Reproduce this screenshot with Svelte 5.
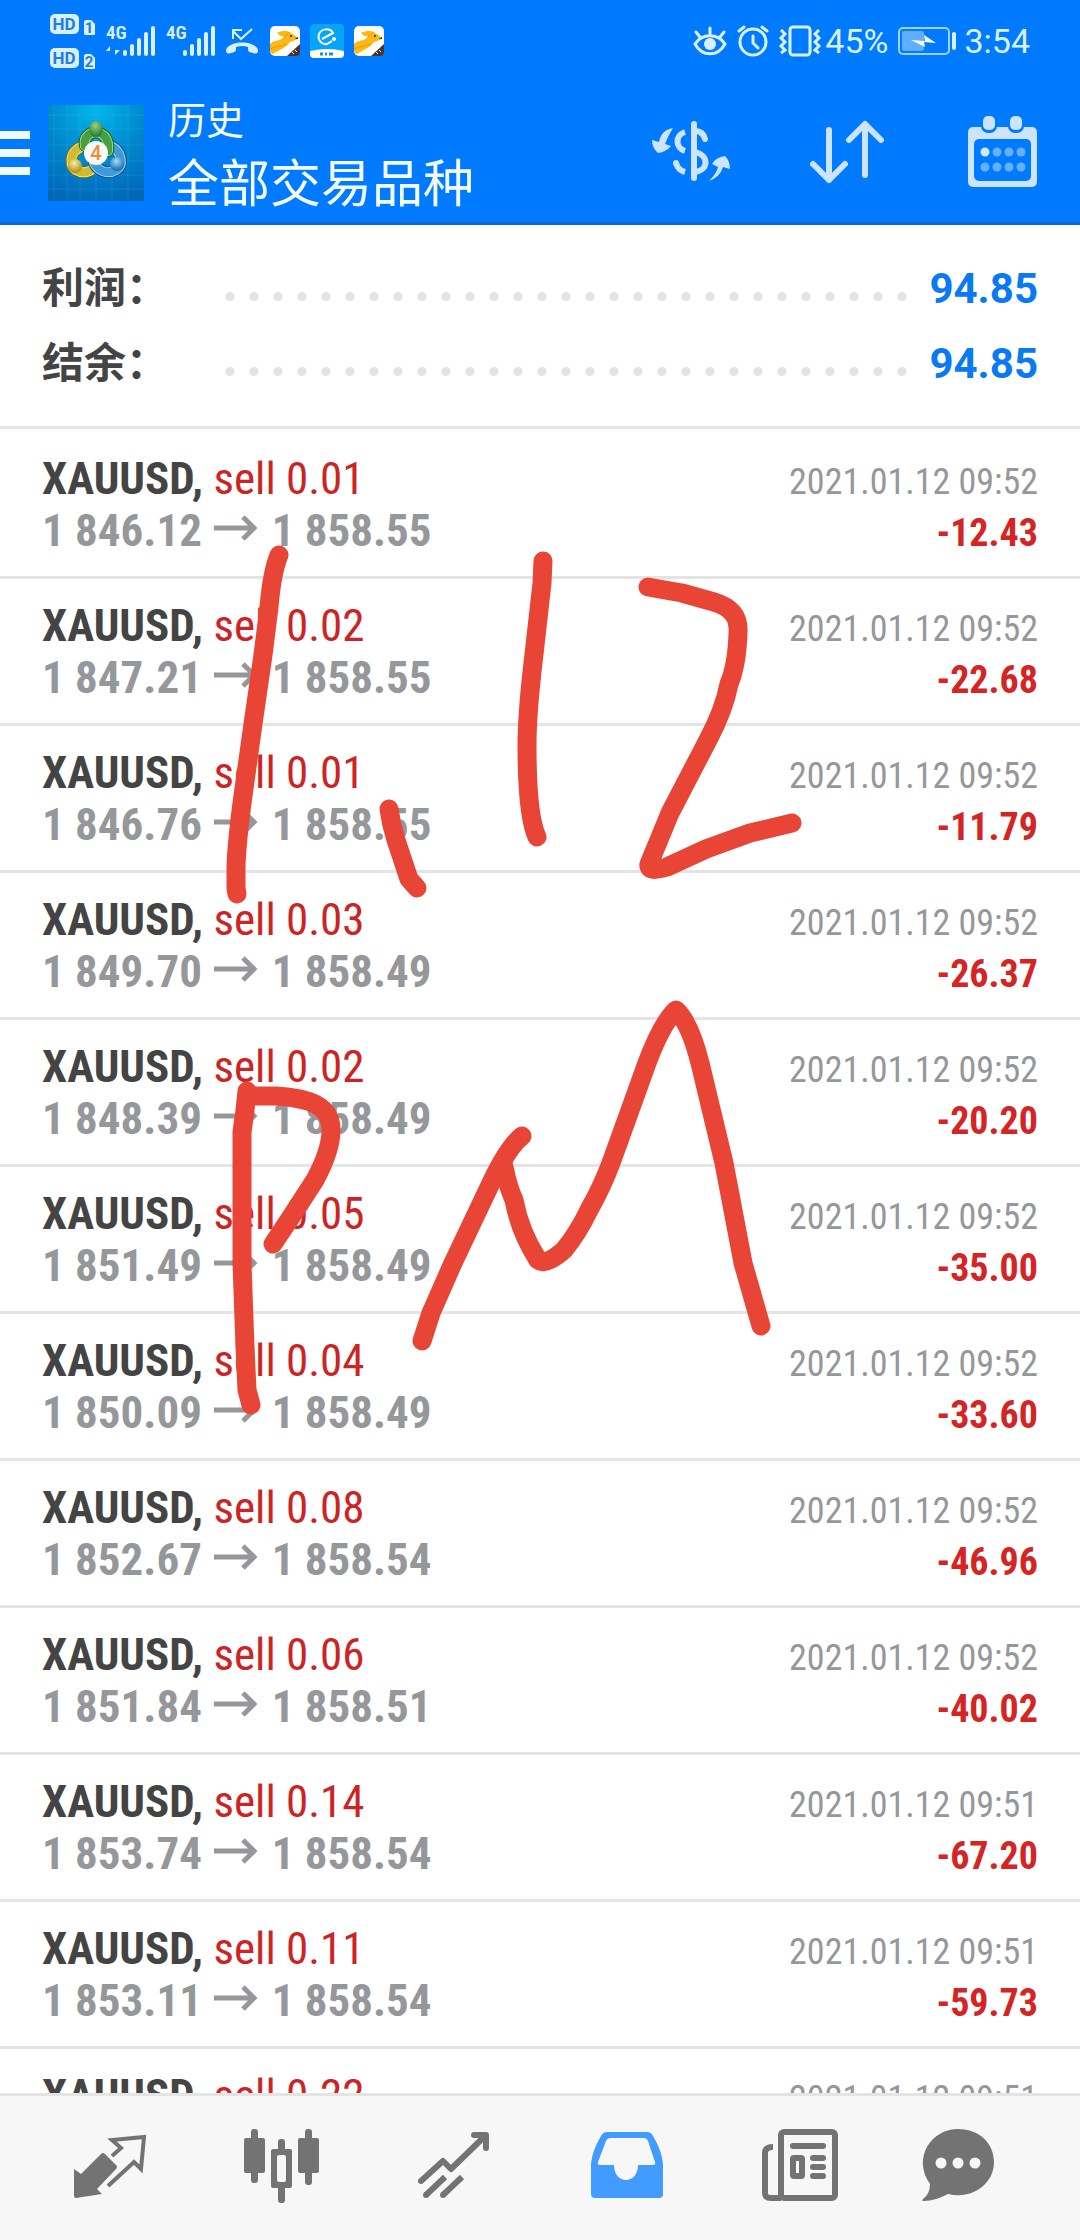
<script lang="ts">
    type Deal = {
        volume: string;
        open: string;
        close: string;
        time: string;
        profit: string;
    };

    const summary = [
        { label: "利润：", value: "94.85" },
        { label: "结余：", value: "94.85" },
    ];

    const deals: Deal[] = [
        { volume: "0.01", open: "1 846.12", close: "1 858.55", time: "09:52", profit: "-12.43" },
        { volume: "0.02", open: "1 847.21", close: "1 858.55", time: "09:52", profit: "-22.68" },
        { volume: "0.01", open: "1 846.76", close: "1 858.55", time: "09:52", profit: "-11.79" },
        { volume: "0.03", open: "1 849.70", close: "1 858.49", time: "09:52", profit: "-26.37" },
        { volume: "0.02", open: "1 848.39", close: "1 858.49", time: "09:52", profit: "-20.20" },
        { volume: "0.05", open: "1 851.49", close: "1 858.49", time: "09:52", profit: "-35.00" },
        { volume: "0.04", open: "1 850.09", close: "1 858.49", time: "09:52", profit: "-33.60" },
        { volume: "0.08", open: "1 852.67", close: "1 858.54", time: "09:52", profit: "-46.96" },
        { volume: "0.06", open: "1 851.84", close: "1 858.51", time: "09:52", profit: "-40.02" },
        { volume: "0.14", open: "1 853.74", close: "1 858.54", time: "09:51", profit: "-67.20" },
        { volume: "0.11", open: "1 853.11", close: "1 858.54", time: "09:51", profit: "-59.73" },
        { volume: "0.22", open: "1 853.20", close: "1 858.54", time: "09:51", profit: "-117.48" },
    ];

    let active = $state("history");
</script>

{#snippet signal(data: boolean)}
    <svg class="signal" width="50" height="32" viewBox="0 0 50 32">
        <text x="0" y="14" font-size="19" font-weight="600">4G</text>
        {#if data}
            <path d="M4 30V21l-4 5h4M9 21v9l5-5H9" />
        {/if}
        <rect x="17" y="25" width="4" height="6" rx="2" />
        <rect x="24" y="19" width="4" height="12" rx="2" />
        <rect x="31" y="13" width="4" height="18" rx="2" />
        <rect x="38" y="7" width="4" height="24" rx="2" />
        <rect x="45" y="1" width="4" height="30" rx="2" />
    </svg>
{/snippet}

{#snippet hd(sim: string)}
    <svg width="46" height="21" viewBox="0 0 46 21">
        <rect width="29" height="20" rx="5" fill="#dbf0ff" />
        <text x="14" y="16" font-size="17" font-weight="700" text-anchor="middle" fill="#1a7fe8">HD</text>
        <path d="M34 8q0-2 2-2h5l4 4v10q0 1-1 1h-9q-1 0-1-1z" fill="#dbf0ff" />
        <text x="39" y="19" font-size="15" font-weight="700" text-anchor="middle" fill="#1a7fe8">{sim}</text>
    </svg>
{/snippet}

{#snippet dogApp()}
    <svg width="30" height="30" viewBox="0 0 30 30">
        <rect width="30" height="30" rx="5" fill="#fff" />
        <path d="M0 18C4 14 9 15 13 12L14 10C11 11 8 9 7 6C10 7 12 4 16 5C20 5 24 9 28 12C26 15 22 15 20 16C17 21 9 24 3 28Q0 27 0 24z" fill="#fdb913" />
        <path d="M0 23C5 20 11 21 17 18M13 12C15 10 18 9 19 6" fill="none" stroke="#f39800" />
        <circle cx="21" cy="10" r="1" fill="#222" />
        <path d="M25 13l3-2v2z" fill="#222" />
        <path d="M30 18v8q0 4-4 4h-9z" fill="#4a3430" />
        <path d="M22 26l2 2M25 24l2 2" stroke="#fff" />
    </svg>
{/snippet}

<div class="app">
    <header>
        <div class="status">
            <div class="hd">
                {@render hd("1")}
                {@render hd("2")}
            </div>
            {@render signal(true)}
            {@render signal(false)}
            <svg class="call" width="32" height="28" viewBox="0 0 32 28">
                <path d="M26 2L15 12L7 4M7 12V3h9" fill="none" stroke="#dbf0ff" stroke-width="2" />
                <path d="M0 23C3 13 29 13 32 23C32 27 30 27 27 26C22 25 22 24 22 20Q16 18 10 20C10 24 10 25 5 26C2 27 0 27 0 23z" fill="#dbf0ff" />
            </svg>
            {@render dogApp()}
            <svg width="34" height="34" viewBox="0 0 34 34">
                <rect width="34" height="34" rx="4" fill="#08a4f5" />
                <path d="M0 27Q17 23 34 27v3q0 4-4 4H4q-4 0-4-4z" fill="#fff" />
                <path d="M12 15L23 9C20 4 12 4 9 10C7 16 12 21 17 20L22 17" fill="none" stroke="#fff" stroke-width="2" />
                <circle cx="24" cy="15" r="2" fill="#fff" />
                <path d="M10 30h3M15 30h2M19 30h4" stroke="#1592e6" stroke-width="3" />
            </svg>
            {@render dogApp()}

            <span class="spacer"></span>

            <svg width="34" height="32" viewBox="0 0 34 32" fill="none" stroke="#d8f1ff" stroke-width="3" stroke-linecap="round">
                <path d="M2 19C9 8 25 8 32 19C25 32 9 32 2 19zM17 9V3M7 12L3 7M27 12l4-5" />
                <circle cx="17" cy="19" r="6" fill="#d8f1ff" stroke="none" />
            </svg>
            <svg width="32" height="32" viewBox="0 0 32 32" fill="none" stroke="#d8f1ff" stroke-width="3" stroke-linecap="round">
                <circle cx="16" cy="17" r="13" />
                <path d="M16 11v7l5 5M2 6l5-4M30 6l-5-4" />
            </svg>
            <svg width="42" height="32" viewBox="0 0 42 32" fill="none" stroke="#d8f1ff" stroke-width="3">
                <rect x="11" y="2" width="20" height="28" rx="3" />
                <path d="M2 5l4 4-4 4 4 4-4 4 4 4-4 3M40 5l-4 4 4 4-4 4 4 4-4 4 4 3" />
            </svg>
            <span class="percent">45%</span>
            <svg width="60" height="28" viewBox="0 0 60 28">
                <rect x="1" y="1" width="50" height="26" rx="4" fill="none" stroke="#9fd2ff" stroke-width="2" />
                <rect x="4" y="4" width="22" height="20" rx="2" fill="#5faeff" />
                <path d="M13 13l14 1-1-6 12 8-12-1 1 5z" fill="#fff" />
                <rect x="54" y="5" width="4" height="18" rx="2" fill="#d8f1ff" />
            </svg>
            <span class="clock">3:54</span>
        </div>

        <div class="toolbar">
            <button class="menu" aria-label="菜单">
                <svg width="30" height="44" viewBox="0 0 30 44" fill="#f0f9ff">
                    <path d="M0 0h30v8H0zM0 18h30v8H0zM0 36h30v8H0z" />
                </svg>
            </button>
            <svg class="logo" width="96" height="96" viewBox="0 0 96 96">
                <defs>
                    <radialGradient id="sky" cx="50%" cy="5%" r="100%">
                        <stop offset="0" stop-color="#00b6ea" />
                        <stop offset="0.5" stop-color="#0088cc" />
                        <stop offset="1" stop-color="#0066b8" />
                    </radialGradient>
                    <radialGradient id="green" cx="45%" cy="30%" r="70%">
                        <stop offset="0" stop-color="#9ad08a" />
                        <stop offset="1" stop-color="#1e7a2c" />
                    </radialGradient>
                    <radialGradient id="gold" cx="45%" cy="30%" r="70%">
                        <stop offset="0" stop-color="#f8f0a0" />
                        <stop offset="1" stop-color="#a98a10" />
                    </radialGradient>
                    <radialGradient id="blue" cx="45%" cy="30%" r="70%">
                        <stop offset="0" stop-color="#a4dcf8" />
                        <stop offset="1" stop-color="#1565a8" />
                    </radialGradient>
                </defs>
                <rect width="96" height="96" fill="url(#sky)" />
                <path d="M6 0v96M19 0v96M32 0v96M48 0v96M64 0v96M80 0v96M0 10h96M0 24h96M0 40h96M0 56h96M0 70h96M0 84h96" stroke="#4cc4ee" stroke-opacity="0.2" />
                <g fill="none" stroke-linecap="round">
                    <path d="M40 41C23 41 19 59 28 65C36 70 44 66 49 60" stroke="#75680f" stroke-width="12" />
                    <path d="M40 41C23 41 19 59 28 65C36 70 44 66 49 60" stroke="#f0e68a" stroke-width="10" />
                    <path d="M40 41C23 41 19 59 28 65C36 70 44 66 49 60" stroke="#cdbb30" stroke-width="8" />
                    <path d="M63 41C74 47 76 60 68 65C60 70 50 66 46 58" stroke="#0e4a8a" stroke-width="12" />
                    <path d="M63 41C74 47 76 60 68 65C60 70 50 66 46 58" stroke="#9bd4f5" stroke-width="10" />
                    <path d="M63 41C74 47 76 60 68 65C60 70 50 66 46 58" stroke="#3f9bd8" stroke-width="8" />
                    <path d="M37 41C33 24 63 20 60 46" stroke="#17622a" stroke-width="12" />
                    <path d="M37 41C33 24 63 20 60 46" stroke="#a5d890" stroke-width="10" />
                    <path d="M37 41C33 24 63 20 60 46" stroke="#46a040" stroke-width="8" />
                </g>
                <ellipse cx="48" cy="24" rx="7" ry="8" fill="url(#green)" />
                <circle cx="27" cy="61" r="7" fill="url(#gold)" />
                <circle cx="69" cy="59" r="7" fill="url(#blue)" />
                <circle cx="48" cy="48" r="12" fill="#f8f8f8" />
                <text x="48" y="55" font-size="20" font-weight="500" text-anchor="middle" fill="#f58a30">4</text>
            </svg>
            <h1>
                <small>历史</small>
                全部交易品种
            </h1>
            <div class="actions">
                <button aria-label="货币">
                    <svg width="96" height="96" viewBox="0 0 96 96" fill="none" stroke="#cce4ff" stroke-width="6">
                        <path d="M51 19v54" stroke-linecap="round" />
                        <path d="M42 27C32 30 32 43 42 46M42 67Q35 65 33 58" />
                        <circle cx="33" cy="58" r="3" fill="#cce4ff" stroke="none" />
                        <path d="M52 26Q60 26 62 34" stroke-linecap="round" />
                        <path d="M52 47C66 50 66 65 52 67" />
                        <path d="M30 23C19 25 17 32 16 37L9 35Q9 43 15 48Q23 47 28 41L22 39Q25 31 30 23zM66 76C73 69 74 65 75 62L69 59Q73 52 82 51Q87 56 87 64L80 62Q77 72 66 76z" fill="#cce4ff" stroke="none" />
                    </svg>
                </button>
                <button aria-label="排序">
                    <svg width="96" height="96" viewBox="0 0 96 96" fill="none" stroke="#cce4ff" stroke-width="6" stroke-linecap="round" stroke-linejoin="round">
                        <path d="M30 25v50M14 59l16 16 16-16M66 70V20M50 35l16-16 16 16" />
                    </svg>
                </button>
                <button aria-label="日期">
                    <svg width="96" height="96" viewBox="0 0 96 96">
                        <rect x="13" y="22" width="69" height="60" rx="5" fill="#cce4ff" />
                        <rect x="19" y="34" width="57" height="42" rx="5" fill="#007aff" />
                        <rect x="26" y="9" width="16" height="19" rx="7" fill="#007aff" />
                        <rect x="53" y="9" width="16" height="19" rx="7" fill="#007aff" />
                        <rect x="28" y="11" width="12" height="14" rx="5" fill="#cce4ff" />
                        <rect x="55" y="11" width="12" height="14" rx="5" fill="#cce4ff" />
                        {#each [47, 62] as cy}
                            {#each [30, 42, 54, 66] as cx}
                                <circle {cx} {cy} r="4.5" fill={cy === 47 && cx === 30 ? "#cfeaff" : "#66afff"} />
                            {/each}
                        {/each}
                    </svg>
                </button>
            </div>
        </div>
    </header>

    <main>
        <dl class="summary">
            {#each summary as item}
                <div>
                    <dt>{item.label}</dt>
                    <dd class="dots"></dd>
                    <dd>{item.value}</dd>
                </div>
            {/each}
        </dl>

        <ul class="deals">
            {#each deals as deal}
                <li>
                    <span class="symbol"><b>XAUUSD,</b> sell {deal.volume}</span>
                    <time>2021.01.12 {deal.time}</time>
                    <span class="prices">
                        {deal.open}
                        <svg width="45" height="30" viewBox="0 0 45 30" fill="none" stroke="#95979a" stroke-width="5" aria-label="→">
                            <path d="M0 12h41M29 1l11 11-11 11" />
                        </svg>
                        {deal.close}
                    </span>
                    <strong>{deal.profit}</strong>
                </li>
            {/each}
        </ul>
    </main>

    <nav>
        <button class:active={active === "quotes"} aria-label="行情" onclick={() => (active = "quotes")}>
            <svg width="96" height="96" viewBox="0 0 96 96" fill="currentColor">
                <path d="M12 49l7 5L39 34q2-2 4 0L54 45q2 2 0 4L35 69l5 5L14 78q-2 0-2-2z" />
                <path d="M50 36l9-8-9-8 32-3-3 32-7-7-26 24" fill="none" stroke="currentColor" stroke-width="4" />
            </svg>
        </button>
        <button class:active={active === "chart"} aria-label="图表" onclick={() => (active = "chart")}>
            <svg width="96" height="96" viewBox="0 0 96 96" fill="currentColor">
                <rect x="10" y="18" width="21" height="35" rx="2" />
                <rect x="17" y="9" width="7" height="54" rx="3" />
                <rect x="64" y="18" width="21" height="35" rx="2" />
                <rect x="71" y="9" width="7" height="56" rx="3" />
                <rect x="37" y="29" width="21" height="39" rx="2" />
                <rect x="44" y="19" width="7" height="64" rx="3" />
                <rect x="43" y="35" width="9" height="27" rx="2" fill="#f7f7f7" />
            </svg>
        </button>
        <button class:active={active === "trade"} aria-label="交易" onclick={() => (active = "trade")}>
            <svg width="96" height="96" viewBox="0 0 96 96" fill="none" stroke="currentColor" stroke-width="6">
                <path d="M15 61l22-20 8 8 34-33M68 15h12v13" stroke-linecap="round" stroke-linejoin="round" />
                <path d="M20 75l19-18M37 75l19-18" />
                <path d="M20 75h0M37 75h0" stroke-linecap="round" />
            </svg>
        </button>
        <button class:active={active === "history"} aria-label="历史" onclick={() => (active = "history")}>
            <svg width="96" height="96" viewBox="0 0 96 96" fill="currentColor" fill-rule="evenodd">
                <path d="M29 12h40q4 0 6 4Q84 31 85 44v30q0 4-4 4H17q-4 0-4-4V44Q14 31 23 16q2-4 6-4zM33 18q-4 0-5 3L20 42q-1 3 2 3h14c0 20 24 20 24 0h15q3 0 2-3L70 21q-1-3-5-3z" />
            </svg>
        </button>
        <button class:active={active === "news"} aria-label="新闻" onclick={() => (active = "news")}>
            <svg width="96" height="96" viewBox="0 0 96 96" fill="none" stroke="currentColor" stroke-width="6">
                <rect x="31" y="12" width="54" height="66" rx="3" />
                <path d="M23 27q-8 0-8 6v40q0 5 6 5h10" />
                <path d="M43 26h30M63 38h10M63 47h10M63 56h10" stroke-linecap="round" />
                <rect x="43" y="38" width="9" height="18" rx="1" />
            </svg>
        </button>
        <button class:active={active === "chat"} aria-label="消息" onclick={() => (active = "chat")}>
            <svg width="96" height="96" viewBox="0 0 96 96" fill="currentColor">
                <path d="M36 9C58 9 72 24 72 42C72 64 50 80 26 74Q13 81 2 81Q-1 81 1 79Q8 74 8 64C-10 38 9 9 36 9z" />
                <circle cx="19" cy="43" r="5.5" fill="#f7f7f7" />
                <circle cx="36" cy="43" r="5.5" fill="#f7f7f7" />
                <circle cx="53" cy="43" r="5.5" fill="#f7f7f7" />
            </svg>
        </button>
    </nav>

    <!-- Handwritten marker note over the list: "1.12 PM" -->
    <svg class="marker" viewBox="0 0 1080 2240" aria-label="1.12 PM">
        <path d="M279 555Q272 572 269 607L263 655L253 724L242 803Q236 850 236 870V888L237 894" />
        <path d="M389 809Q391 824 396 840L409 879L417 888" />
        <path d="M543 561L542 583L533 663Q527 715 527 745C527 785 529 820 537 837" />
        <path d="M648 587L682 593L714 602C734 608 739 619 738 633Q737 665 729 684Q724 710 708 740L670 813L649 864Q647 873 667 867L706 849L750 833L792 823" />
        <path d="M247 1091Q245 1113 242 1132V1263L245 1347L247 1390L251 1405" />
        <path d="M247 1096H275C311 1098 331 1106 331 1130C331 1148 322 1167 315 1180L291 1217L273 1244" />
        <path d="M422 1341L431 1313L453 1263L491 1183Q508 1147 522 1136" />
        <path d="M504 1167Q508 1187 514 1200Q520 1232 538 1260Q546 1266 564 1250Q578 1233 589 1210Q602 1187 611 1163L647 1063Q662 1023 676 1010Q690 1023 700 1063L724 1163L743 1263L761 1326" />
    </svg>
</div>

<style>
    :global(body) {
        margin: 0;
        background: #fff;
    }
    .app {
        position: relative;
        display: flex;
        flex-direction: column;
        height: 100vh;
        overflow: hidden;
        font-family: "Roboto Condensed", Roboto, "Noto Sans CJK SC", sans-serif;
        color: #95979a;
    }
    button {
        display: flex;
        padding: 0;
        border: 0;
        background: none;
        color: inherit;
        cursor: pointer;
    }
    svg {
        display: block;
        flex: none;
        overflow: visible;
    }

    header {
        background: #007aff;
        border-bottom: 3px solid #0b69d2;
        color: #f4fbff;
        font-family: Roboto, "Noto Sans CJK SC", sans-serif;
    }
    .status {
        display: flex;
        align-items: center;
        height: 82px;
        padding: 0 50px;
        font-size: 34px;
        line-height: 40px;
        color: #d8f1ff;
        gap: 10px;
    }
    .hd {
        display: flex;
        flex-direction: column;
        gap: 13px;
    }
    .signal {
        fill: #dbf0ff;
        font-family: "Roboto Condensed", Roboto, sans-serif;
    }
    .call {
        margin-right: 2px;
    }
    .spacer {
        flex: 1;
    }
    .percent {
        margin-left: -6px;
    }
    .clock {
        margin-left: -4px;
    }
    .toolbar {
        display: flex;
        align-items: center;
        height: 138px;
        padding: 2px 29px 0 0;
    }
    .logo {
        margin: 0 24px 0 18px;
    }
    h1 {
        display: flex;
        flex-direction: column;
        margin: 0;
        font-size: 51px;
        line-height: 64px;
        font-weight: 400;
        white-space: nowrap;
    }
    small {
        font-size: 38px;
    }
    .actions {
        display: flex;
        gap: 60px;
        margin-left: auto;
    }

    main {
        flex: 1;
        min-height: 0;
        overflow: hidden;
    }
    .summary {
        margin: 0;
        padding: 26px 42px 25px;
        border-bottom: 3px solid #e4e4e4;
        font: bold 42px/75px Roboto, "Noto Sans CJK SC", sans-serif;
    }
    .summary div {
        display: flex;
    }
    dt {
        width: 176px;
        color: #444;
    }
    dd {
        min-width: 124px;
        margin: 0;
        text-align: right;
        color: #0a7af0;
    }
    .dots {
        flex: 1;
        background: radial-gradient(circle, #e4e4e4 4px, transparent 5px) 0 8px / 24px 75px;
    }

    .deals {
        margin: 0;
        padding: 3px 0 0;
        list-style: none;
    }
    li {
        display: grid;
        grid-template-columns: 1fr auto;
        align-items: baseline;
        row-gap: 2px;
        padding: 22px 42px 20px;
        border-bottom: 3px solid #e4e4e4;
        font-size: 45px;
        line-height: 50px;
    }
    .symbol {
        color: #cc2424;
    }
    b {
        color: #444;
    }
    time {
        font-size: 36px;
        line-height: 40px;
        text-align: right;
    }
    .prices {
        font-weight: bold;
    }
    .prices svg {
        display: inline-block;
        margin: 0 2px;
    }
    strong {
        font-size: 38px;
        line-height: 40px;
        text-align: right;
        color: #d42424;
    }

    nav {
        display: grid;
        grid-template-columns: repeat(6, 1fr);
        height: 144px;
        padding: 0 24px;
        border-top: 3px solid #e4e4e4;
        background: #f7f7f7;
        color: #737373;
    }
    nav button {
        align-items: center;
        justify-content: center;
    }
    nav .active {
        color: #429bff;
    }

    .marker {
        position: absolute;
        top: 0;
        left: 0;
        width: 100%;
        fill: none;
        stroke: #e94536;
        stroke-width: 19;
        stroke-linecap: round;
        stroke-linejoin: round;
        pointer-events: none;
    }
</style>
